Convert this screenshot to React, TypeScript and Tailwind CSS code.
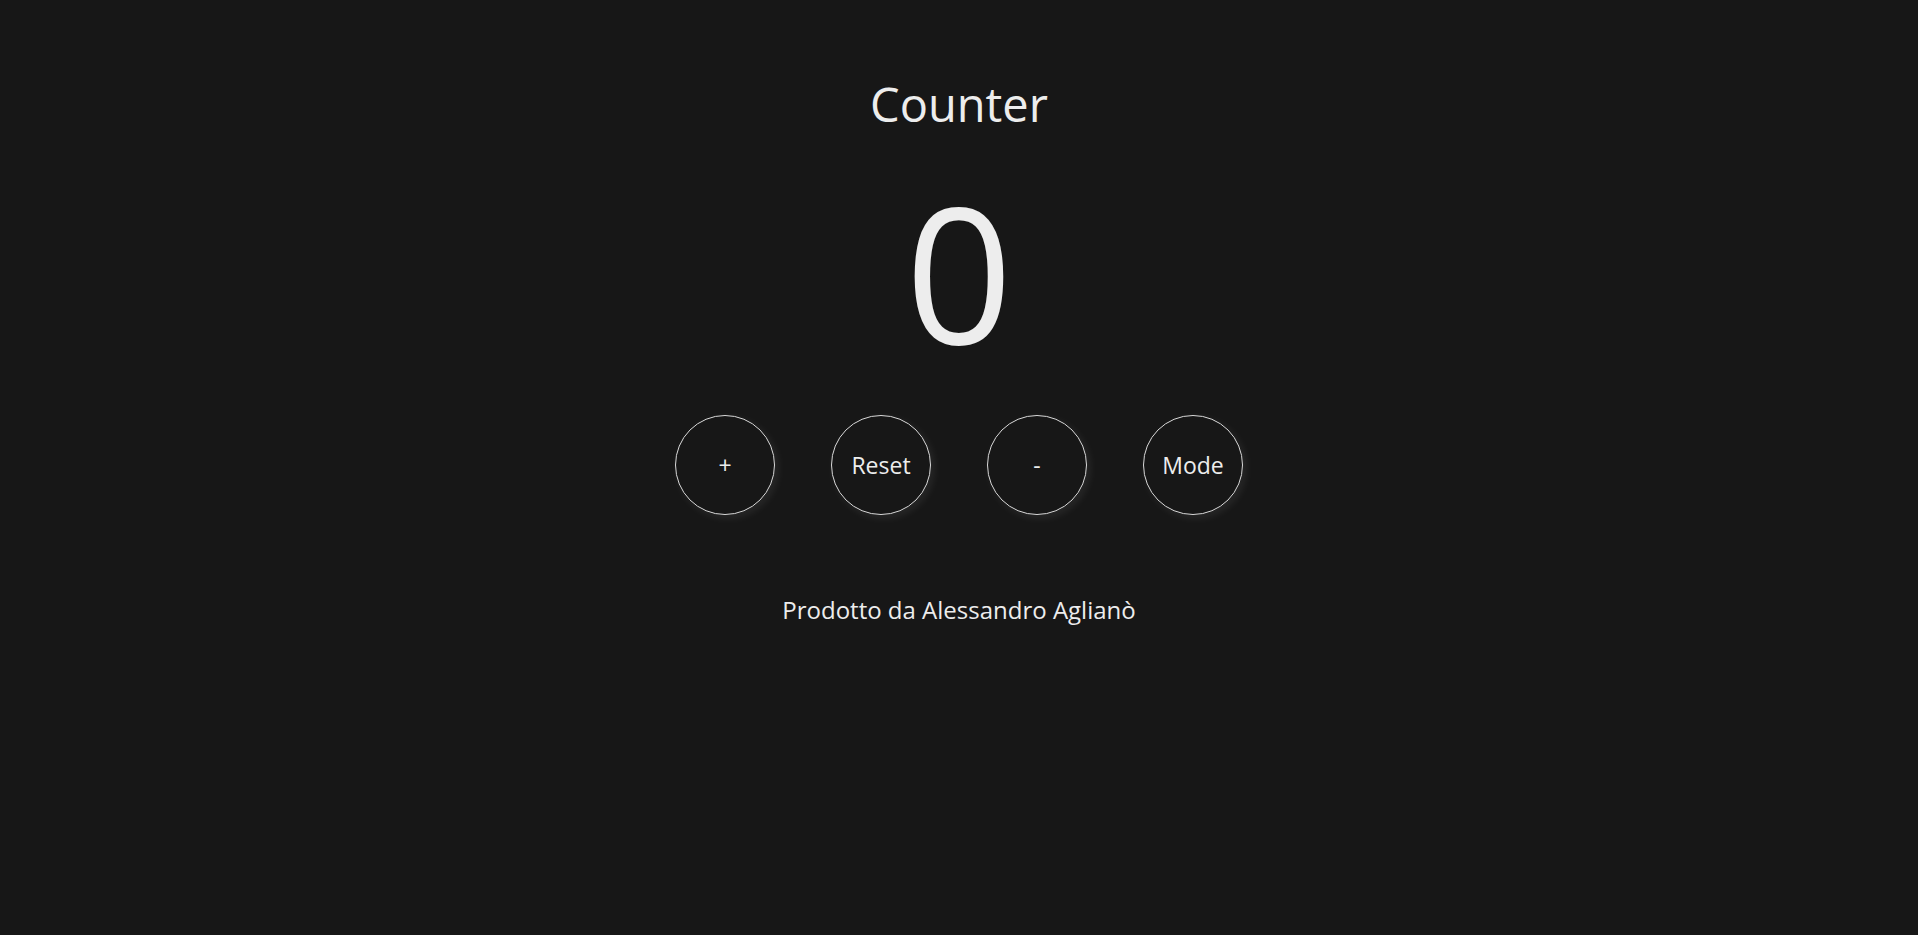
import { useState } from "react";

const buttons = ["+", "Reset", "-", "Mode"];

const App = () => {
  const [count, setCount] = useState(0);

  const handle = (label: string) => {
    if (label === "+") setCount(count + 1);
    else if (label === "-") setCount(count - 1);
    else if (label === "Reset") setCount(0);
  };

  return (
    <div className="min-h-screen w-full bg-[#171717] text-[#ededed] font-['Open_Sans',sans-serif] flex flex-col items-center">
      <h1 className="mt-[72px] text-[47px] leading-[64px] font-normal">Counter</h1>
      <div className="mt-[35px] text-[188px] leading-[200px] font-normal">{count}</div>
      <div className="mt-[44px] flex gap-[56px]">
        {buttons.map((b) => (
          <button
            key={b}
            onClick={() => handle(b)}
            className="w-[100px] h-[100px] rounded-full border border-[#d9d9d9] text-[23px] text-[#ededed] shadow-[3px_3px_8px_rgba(255,255,255,0.08)] flex items-center justify-center"
          >
            {b}
          </button>
        ))}
      </div>
      <p className="mt-[79px] text-[24px] leading-[32px]">Prodotto da Alessandro Aglianò</p>
    </div>
  );
};

export default App;
